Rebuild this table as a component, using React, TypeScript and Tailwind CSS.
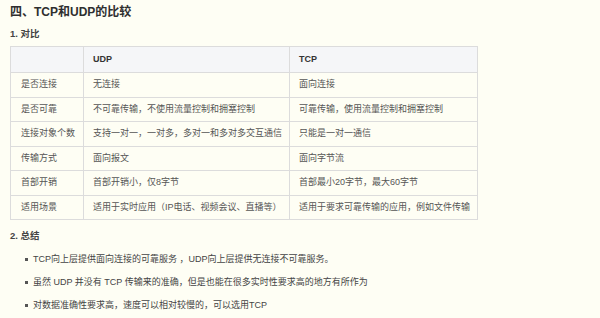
const rows: [string, string, string][] = [
  ["是否连接", "无连接", "面向连接"],
  ["是否可靠", "不可靠传输，不使用流量控制和拥塞控制", "可靠传输，使用流量控制和拥塞控制"],
  ["连接对象个数", "支持一对一，一对多，多对一和多对多交互通信", "只能是一对一通信"],
  ["传输方式", "面向报文", "面向字节流"],
  ["首部开销", "首部开销小，仅8字节", "首部最小20字节，最大60字节"],
  ["适用场景", "适用于实时应用（IP电话、视频会议、直播等）", "适用于要求可靠传输的应用，例如文件传输"],
];

const bullets = [
  "TCP向上层提供面向连接的可靠服务 ，UDP向上层提供无连接不可靠服务。",
  "虽然 UDP 并没有 TCP 传输来的准确，但是也能在很多实时性要求高的地方有所作为",
  "对数据准确性要求高，速度可以相对较慢的，可以选用TCP",
];

export default function App() {
  return (
    <main
      className="w-[600px] h-[318px] overflow-hidden bg-[#fefef4] text-[#333] px-[10px] pt-[3px]"
      style={{ fontFamily: '"Liberation Sans", "Noto Sans CJK SC", sans-serif' }}
    >
      <h1 className="text-[12px] font-bold leading-[18px] text-[#2f2f2f]">四、TCP和UDP的比较</h1>
      <h2 className="text-[9.5px] font-bold leading-[14px] mt-[6px] text-[#444]">1. 对比</h2>
      <table className="mt-[5px] w-[467px] border-collapse text-[9px] text-[#555] table-fixed">
        <colgroup>
          <col className="w-[73px]" />
          <col className="w-[206px]" />
          <col className="w-[188px]" />
        </colgroup>
        <thead>
          <tr className="h-[26px] bg-[#f5f6f8]">
            <th className="border border-[#dcdcdc] px-[10px] text-left font-bold"></th>
            <th className="border border-[#dcdcdc] px-[9px] text-left font-bold text-[#333]">UDP</th>
            <th className="border border-[#dcdcdc] px-[9px] text-left font-bold text-[#333]">TCP</th>
          </tr>
        </thead>
        <tbody>
          {rows.map((r, i) => (
            <tr key={i} className="h-[24.5px]">
              {r.map((c, j) => (
                <td key={j} className={`border border-[#dcdcdc] whitespace-nowrap ${j === 0 ? "px-[10px]" : "px-[9px]"}`}>{c}</td>
              ))}
            </tr>
          ))}
        </tbody>
      </table>
      <h2 className="text-[9.5px] font-bold leading-[14px] mt-[9px] text-[#444]">2. 总结</h2>
      <ul className="mt-[5px] pl-[15px] text-[9px] text-[#444]">
        {bullets.map((b, i) => (
          <li key={i} className="flex items-center gap-[3px] h-[23px]">
            <span className="w-[3px] h-[3px] bg-[#555] mr-[2px] shrink-0"></span>
            {b}
          </li>
        ))}
      </ul>
    </main>
  );
}
